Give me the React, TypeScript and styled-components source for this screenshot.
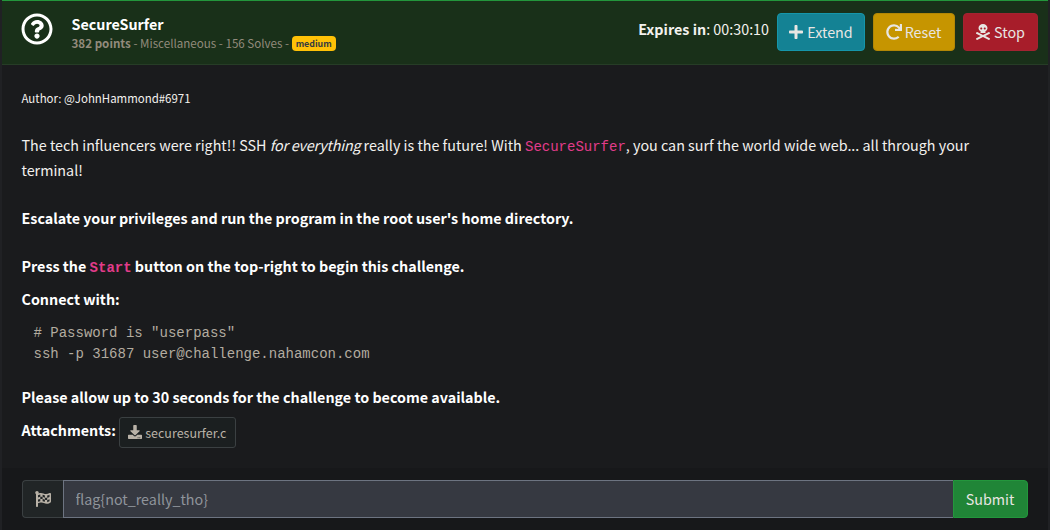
import React from "react";
import styled, { createGlobalStyle } from "styled-components";
import {
  FaDownload,
  FaFlagCheckered,
  FaPlus,
  FaRedo,
  FaRegQuestionCircle,
  FaSkullCrossbones,
} from "react-icons/fa";

const GlobalStyle = createGlobalStyle`
  * { box-sizing: border-box; }
  body {
    margin: 0;
    background: #202124;
    color: #f3f1ee;
    font: 14.32px/24px "Noto Sans CJK JP", "Noto Sans", sans-serif;
  }
`;

const Card = styled.main`
  display: flex;
  flex-direction: column;
  width: 1046px;
  height: 530px;
  margin: 0 auto;
  background: #1a1b1d;
  overflow: hidden;
`;

const Header = styled.header`
  display: flex;
  align-items: flex-start;
  height: 65px;
  padding: 0 10px 0 19px;
  background: #193019;
  border-top: 1px solid #23963c;
  border-bottom: 1px solid #263d26;
`;

const CategoryIcon = styled.div`
  width: 50.5px;
  padding-top: 12px;
  color: #fff;
  svg { display: block; width: 32px; height: 32px; }
`;

const Heading = styled.div`
  flex: 1;
  padding-top: 11px;
`;

const Title = styled.h1`
  margin: 0;
  font-size: 14.32px;
  line-height: 24px;
  color: #fff;
`;

const Meta = styled.div`
  display: flex;
  align-items: center;
  height: 14px;
  font-size: 11.6px;
  line-height: 22px;
  color: #928b7c;
  white-space: pre;
`;

const Badge = styled.span`
  height: 15px;
  margin-top: 1px;
  padding: 0 4px;
  border-radius: 4px;
  background: #ffc107;
  color: #343a40;
  font-size: 8.8px;
  font-weight: 700;
  line-height: 15px;
`;

const Timer = styled.div`
  padding: 16px 8px 0 0;
`;

const Actions = styled.div`
  display: flex;
  gap: 8px;
  padding-top: 12px;
`;

const Action = styled.button<{ $width: number; $fill: string; $edge: string }>`
  display: flex;
  align-items: center;
  justify-content: center;
  gap: 3px;
  width: ${(p) => p.$width}px;
  height: 38px;
  padding: 0 1px 0 0;
  border: 1px solid ${(p) => p.$edge};
  border-radius: 4px;
  background: ${(p) => p.$fill};
  color: #e8e6e3;
  font: inherit;
`;

const Body = styled.section`
  flex: 1;
  padding: 21px 20px 0 19.5px;
`;

const Author = styled.p`
  margin: 0 0 22px;
  font-size: 11.45px;
  line-height: 24px;
`;

const Text = styled.p<{ $gap: number; $bold?: boolean }>`
  margin: 0 0 ${(p) => p.$gap}px;
  line-height: 25px;
  font-weight: ${(p) => (p.$bold ? 700 : 400)};
  color: ${(p) => (p.$bold ? "#fff" : "#f3f1ee")};
`;

const Emphasis = styled.em`
  letter-spacing: -0.2px;
`;

const Code = styled.code`
  font-family: "Liberation Mono", monospace;
  font-size: 14px;
  line-height: 1;
  color: #e23c8a;
`;

const Snippet = styled.pre`
  margin: 0 0 19px;
  padding-left: 12px;
  font: 14px/21px "Liberation Mono", monospace;
  color: #b3aca0;
`;

const Attachments = styled.div`
  display: flex;
  align-items: flex-start;
  gap: 3px;
  font-weight: 700;
  color: #fff;
`;

const AttachmentsLabel = styled.span`
  padding-top: 1px;
`;

const FileButton = styled.button`
  display: flex;
  align-items: center;
  justify-content: center;
  gap: 3px;
  width: 117px;
  height: 31px;
  padding: 0 0 1px;
  border: 1px solid #3b4042;
  border-radius: 3px;
  background: #1b1f20;
  color: #b9b2a7;
  font: 12.5px/21px "Noto Sans CJK JP", sans-serif;
`;

const Footer = styled.footer`
  display: flex;
  height: 62px;
  padding: 12px 20px;
  background: #17181a;
`;

const Prefix = styled.span`
  display: flex;
  align-items: center;
  justify-content: center;
  width: 41px;
  border: 1px solid #3b4042;
  border-right: 0;
  border-radius: 4px 0 0 4px;
  background: #212526;
  color: #b9b2a7;
`;

const FlagInput = styled.input`
  flex: 1;
  min-width: 0;
  padding: 0 11.5px;
  border: 1px solid #6d7481;
  border-right: 0;
  border-radius: 0;
  background: #363941;
  color: #e8e6e3;
  font: inherit;
  &::placeholder { color: #8f949b; opacity: 1; }
`;

const Submit = styled.button`
  width: 75px;
  padding: 0 1px 0 0;
  border: 1px solid #23963c;
  border-radius: 0 4px 4px 0;
  background: #208537;
  color: #e8e6e3;
  font: inherit;
`;

export default function App() {
  return (
    <>
      <GlobalStyle />
      <Card>
        <Header>
          <CategoryIcon><FaRegQuestionCircle /></CategoryIcon>
          <Heading>
            <Title>SecureSurfer</Title>
            <Meta>
              <strong>382 points</strong>
              <span> - Miscellaneous - 156 Solves - </span>
              <Badge>medium</Badge>
            </Meta>
          </Heading>
          <Timer><strong>Expires in</strong>: 00:30:10</Timer>
          <Actions>
            <Action $width={88} $fill="#148294" $edge="#1596aa"><FaPlus size={16} />Extend</Action>
            <Action $width={82} $fill="#c69500" $edge="#b28706"><FaRedo size={16} />Reset</Action>
            <Action $width={75} $fill="#a71d2a" $edge="#a32331"><FaSkullCrossbones size={16} />Stop</Action>
          </Actions>
        </Header>
        <Body>
          <Author>Author: @JohnHammond#6971</Author>
          <Text $gap={23}>
            The tech influencers were right!! SSH <Emphasis>for everything</Emphasis> really is the future! With{" "}
            <Code>SecureSurfer</Code>, you can surf the world wide web... all through your terminal!
          </Text>
          <Text $gap={23} $bold>Escalate your privileges and run the program in the root user's home directory.</Text>
          <Text $gap={8} $bold>Press the <Code>Start</Code> button on the top-right to begin this challenge.</Text>
          <Text $gap={12} $bold>Connect with:</Text>
          <Snippet>{'# Password is "userpass"\nssh -p 31687 user@challenge.nahamcon.com'}</Snippet>
          <Text $gap={8} $bold>Please allow up to 30 seconds for the challenge to become available.</Text>
          <Attachments>
            <AttachmentsLabel>Attachments:</AttachmentsLabel>
            <FileButton><FaDownload size={14} />securesurfer.c</FileButton>
          </Attachments>
        </Body>
        <Footer>
          <Prefix><FaFlagCheckered size={16} /></Prefix>
          <FlagInput placeholder="flag{not_really_tho}" />
          <Submit>Submit</Submit>
        </Footer>
      </Card>
    </>
  );
}
